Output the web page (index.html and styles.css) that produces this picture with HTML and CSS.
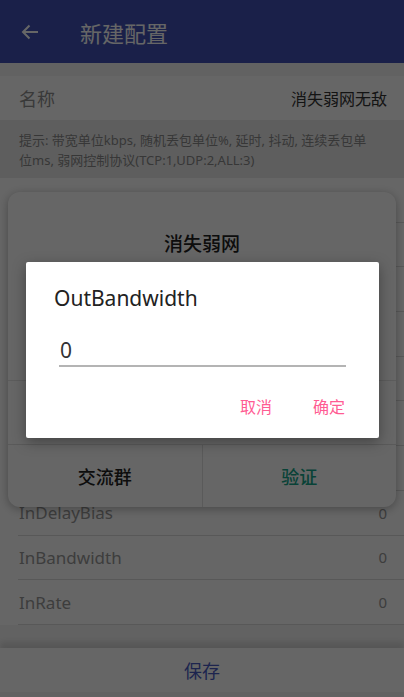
FILE: index.html
```html
<!DOCTYPE html>
<html lang="zh">
<head>
<meta charset="utf-8">
<title>新建配置</title>
<link rel="stylesheet" href="styles.css">
</head>
<body>
<div class="app">
  <header class="bar">
    <svg class="back" width="18" height="16" viewBox="0 0 18 16"><path d="M17 8H2M8.5 1.5L2 8l6.5 6.5" fill="none" stroke="#fff" stroke-width="2"/></svg>
    <span class="bar-title">新建配置</span>
  </header>
  <div class="name-row"><span class="name-label">名称</span><span class="name-value">消失弱网无敌</span></div>
  <div class="hint">提示: 带宽单位kbps, 随机丢包单位%, 延时, 抖动, 连续丢包单位ms, 弱网控制协议(TCP:1,UDP:2,ALL:3)</div>
  <div class="list">
    <div class="row"></div>
    <div class="row"></div>
    <div class="row"></div>
    <div class="row"></div>
    <div class="row"></div>
    <div class="row"></div>
    <div class="row"></div>
    <div class="row"><span>InDelayBias</span><span class="val">0</span></div>
    <div class="row"><span>InBandwidth</span><span class="val">0</span></div>
    <div class="row"><span>InRate</span><span class="val">0</span></div>
  </div>
  <div class="spacer"></div>
  <div class="save">保存</div>
</div>

<div class="layer">
  <div class="mid">
    <div class="mid-title">消失弱网</div>
    <div class="mid-field"></div>
    <div class="mid-rest"></div>
    <div class="mid-actions">
      <div class="mid-btn">交流群</div>
      <div class="mid-btn ok">验证</div>
    </div>
  </div>
</div>

<div class="scrim"></div>

<div class="layer">
  <div class="dlg">
    <div class="dlg-title">OutBandwidth</div>
    <div class="dlg-field">0</div>
    <div class="dlg-actions">
      <span class="dlg-btn">取消</span>
      <span class="dlg-btn">确定</span>
    </div>
  </div>
</div>
</body>
</html>
```
FILE: styles.css
```css
html, body {
  margin: 0;
  padding: 0;
}
body {
  width: 404px;
  height: 697px;
  overflow: hidden;
  position: relative;
  background: #f5f5f5;
  font-family: "Noto Sans", "Noto Sans CJK SC", sans-serif;
}
.app {
  height: 697px;
  display: flex;
  flex-direction: column;
}
.bar {
  height: 63px;
  flex: none;
  background: #4152b6;
  display: flex;
  align-items: center;
  padding-left: 21px;
  color: #fff;
}
.back {
  display: block;
}
.bar-title {
  margin-left: 41px;
  font-size: 22px;
  font-family: "Noto Sans CJK SC", sans-serif;
}
.name-row {
  margin-top: 13px;
  height: 44px;
  flex: none;
  background: #fff;
  display: flex;
  align-items: center;
  justify-content: space-between;
  padding: 0 17px 0 19px;
  font-family: "Noto Sans CJK SC", sans-serif;
}
.name-label {
  font-size: 18px;
  color: #8f8f8f;
}
.name-value {
  font-size: 16px;
  color: #333;
}
.hint {
  flex: none;
  height: 58px;
  box-sizing: border-box;
  padding: 10px 27px 0 19px;
  background: #ececec;
  font-size: 13px;
  line-height: 20px;
  color: #8a8a8a;
}
.list {
  flex: none;
  background: #fff;
}
.row {
  height: 44.7px;
  box-sizing: border-box;
  margin-left: 18px;
  padding: 0 17px 0 1px;
  border-bottom: 1px solid #dcdcdc;
  display: flex;
  align-items: center;
  justify-content: space-between;
  font-size: 17px;
  color: #999;
}
.row .val {
  font-size: 15px;
}
.spacer {
  flex: 1;
}
.save {
  flex: none;
  height: 44px;
  margin-bottom: 5px;
  background: #fff;
  box-shadow: 0 -6px 6px rgba(0, 0, 0, 0.12);
  display: flex;
  align-items: center;
  justify-content: center;
  font-size: 18px;
  color: #4a5bc4;
  font-family: "Noto Sans CJK SC", sans-serif;
}
.layer {
  position: absolute;
  inset: 0;
  display: flex;
  align-items: center;
  justify-content: center;
}
.mid {
  width: 388px;
  height: 315px;
  margin-top: 1px;
  background: #fff;
  border-radius: 12px;
  box-shadow: 0 2px 10px rgba(0, 0, 0, 0.3);
  display: flex;
  flex-direction: column;
  overflow: hidden;
  font-family: "Noto Sans CJK SC", sans-serif;
}
.mid-title {
  height: 64px;
  box-sizing: border-box;
  padding-top: 38px;
  line-height: 26px;
  text-align: center;
  font-size: 19px;
  font-weight: 500;
  color: #222;
}
.mid-field {
  height: 124px;
  border-bottom: 1px solid #e6e6e6;
}
.mid-rest {
  flex: 1;
}
.mid-actions {
  height: 62px;
  border-top: 1px solid #e0e0e0;
  display: flex;
}
.mid-btn {
  flex: 1;
  display: flex;
  align-items: center;
  justify-content: center;
  font-size: 18px;
  font-weight: 500;
  color: #222;
}
.mid-btn + .mid-btn {
  border-left: 1px solid #e0e0e0;
}
.mid-btn.ok {
  color: #14a58a;
}
.scrim {
  position: absolute;
  inset: 0;
  background: rgba(0, 0, 0, 0.6);
}
.dlg {
  width: 353px;
  height: 176px;
  margin-top: 3px;
  margin-left: 1px;
  box-sizing: border-box;
  background: #fff;
  border-radius: 2px;
  box-shadow: 0 4px 14px rgba(0, 0, 0, 0.35);
  padding-top: 22px;
  display: flex;
  flex-direction: column;
}
.dlg-title {
  padding-left: 28px;
  height: 28px;
  line-height: 28px;
  font-size: 21px;
  color: #222;
}
.dlg-field {
  margin: 23px 33px 0 33px;
  height: 30px;
  line-height: 30px;
  padding-left: 1px;
  font-size: 21px;
  color: #333;
  border-bottom: 2px solid #b4b4b4;
}
.dlg-actions {
  margin-top: 21px;
  height: 36px;
  display: flex;
  justify-content: flex-end;
  align-items: center;
  padding-right: 34px;
  gap: 41px;
}
.dlg-btn {
  font-size: 16px;
  color: #ff5c93;
  font-family: "Noto Sans CJK SC", sans-serif;
}
```
